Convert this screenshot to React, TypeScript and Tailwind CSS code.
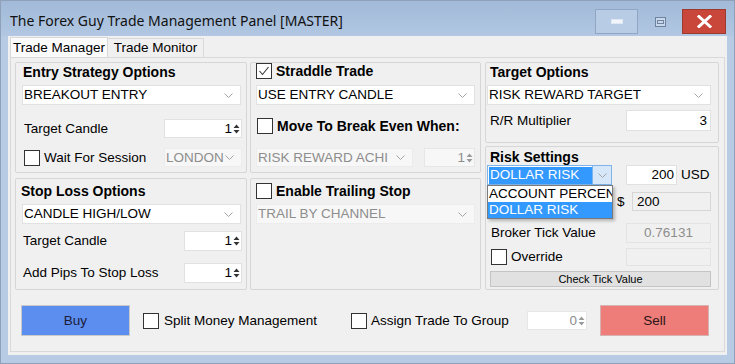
import React from "react";

type Box = { className?: string };

function Check({ checked }: { checked?: boolean }) {
   return (
      <span className="flex h-[16px] w-[16px] shrink-0 items-center justify-center border border-[#333] bg-white">
         {checked && (
            <svg width="12" height="12" viewBox="0 0 12 12">
               <path d="M1.5 6 L4.5 9.5 L10.5 2" stroke="#333" strokeWidth="1.1" fill="none" />
            </svg>
         )}
      </span>
   );
}

function Chevron() {
   return (
      <svg width="9" height="5" viewBox="0 0 9 5" className="shrink-0">
         <path d="M0.5 0.5 L4.5 4.5 L8.5 0.5" stroke="#a4a4a4" strokeWidth="1" fill="none" />
      </svg>
   );
}

function Combo({ value, className, disabled }: Box & { value: string; disabled?: boolean }) {
   return (
      <div
         className={
            "flex items-center overflow-hidden border pl-[1px] pr-[7px] " +
            (disabled ? "border-[#ececec] bg-[#f7f7f7] text-[#8d8d8d] " : "border-[#e1e1e1] bg-white ") +
            className
         }
      >
         <span className="flex-1 overflow-hidden whitespace-nowrap">{value}</span>
         <Chevron />
      </div>
   );
}

function Spin({ value, className, disabled }: Box & { value: string; disabled?: boolean }) {
   return (
      <div
         className={
            "flex items-center justify-end border pr-[1px] " +
            (disabled ? "border-[#e6e6e6] bg-[#f7f7f7] text-[#8d8d8d] " : "border-[#e1e1e1] bg-white ") +
            className
         }
      >
         <span>{value}</span>
         <svg width="7" height="12" viewBox="0 0 7 12" className="ml-[1px]">
            <path d="M0.5 5 L3.5 1.5 L6.5 5 Z M0.5 7 L3.5 10.5 L6.5 7 Z" fill={disabled ? "#9a9a9a" : "#333"} />
         </svg>
      </div>
   );
}

function Group({ className, children }: Box & { children: React.ReactNode }) {
   return <div className={"relative flex flex-col rounded-[2px] border border-[#d6d6d6] " + className}>{children}</div>;
}

function Title({ text, className }: Box & { text: string }) {
   return <div className={"h-[16px] text-[14px] leading-[16px] font-bold " + className}>{text}</div>;
}

export default function App() {
   return (
      <div className="flex h-[364px] w-[735px] flex-col border border-[#8ea1b8] bg-[#b7cbe4] font-['Liberation_Sans',Arial,sans-serif] text-[13.5px] leading-[16px] text-black">
         {/* title bar */}
         <div className="flex h-[35px] items-start bg-gradient-to-b from-[#a2bad8] to-[#b1c7e2]">
            <div className="mt-[11px] ml-[9px] flex-1 font-['Noto_Sans',sans-serif] text-[14px] leading-[18px] text-[#111]">
               The Forex Guy Trade Management Panel [MASTER]
            </div>
            <div className="mt-[8px] mr-[8px] flex">
               <button className="flex h-[25px] w-[43px] items-center justify-center border border-[#8fa6c4] bg-[#b9cce5]">
                  <span className="h-[5px] w-[12px] border border-[#dfe9f5] bg-[#f2f6fb]" />
               </button>
               <button className="flex h-[25px] w-[44px] items-center justify-center">
                  <span className="flex h-[10px] w-[11px] items-center justify-center border border-[#6f82a0] bg-[#c8d7ea]">
                     <span className="h-[4px] w-[7px] border border-[#6f82a0]" />
                  </span>
               </button>
               <button className="flex h-[25px] w-[44px] items-center justify-center border border-[#9c3a2e] bg-[#c8473a]">
                  <svg width="15" height="13" viewBox="0 0 15 13">
                     <path d="M2 1.5 L13 11.5 M13 1.5 L2 11.5" stroke="#fff" strokeWidth="3" strokeLinecap="square" />
                  </svg>
               </button>
            </div>
         </div>

         {/* client area */}
         <div className="mx-[7px] mb-[8px] flex flex-1 flex-col bg-[#f0f0f0] pt-[1px] pl-[2px]">
            {/* tabs */}
            <div className="flex h-[20px] items-end">
               <div className="flex h-[20px] w-[98px] items-center justify-center border border-b-0 border-[#d9d9d9] bg-[#fbfbfb]">
                  Trade Manager
               </div>
               <div className="flex h-[19px] w-[96px] items-center justify-center border border-b-0 border-l-0 border-[#d9d9d9]">
                  Trade Monitor
               </div>
            </div>

            {/* tab page */}
            <div className="mr-[2px] mb-[3px] flex w-[715px] flex-1 flex-col border border-[#d9d9d9] pt-[4px] pl-[4px]">
               <div className="flex">
                  {/* left column */}
                  <div className="flex w-[232px] flex-col">
                     <Group className="h-[111px]">
                        <Title text="Entry Strategy Options" className="mt-[1px] ml-[7px]" />
                        <Combo value="BREAKOUT ENTRY" className="mt-[5px] ml-[6px] h-[20px] w-[219px]" />
                        <div className="mt-[14px] flex h-[19px] items-center pl-[8px]">
                           <span className="flex-1">Target Candle</span>
                           <Spin value="1" className="mr-[4px] h-[19px] w-[78px]" />
                        </div>
                        <div className="mt-[10px] flex h-[19px] items-center pl-[8px]">
                           <Check />
                           <span className="ml-[4px] flex-1">Wait For Session</span>
                           <Combo value="LONDON" disabled className="mr-[4px] h-[19px] w-[78px]" />
                        </div>
                     </Group>
                     <Group className="mt-[5px] h-[112px]">
                        <Title text="Stop Loss Options" className="mt-[4px] ml-[5px]" />
                        <Combo value="CANDLE HIGH/LOW" className="mt-[5px] ml-[6px] h-[20px] w-[219px]" />
                        <div className="mt-[7px] flex h-[20px] items-center pl-[7px]">
                           <span className="flex-1">Target Candle</span>
                           <Spin value="1" className="mr-[4px] h-[20px] w-[58px]" />
                        </div>
                        <div className="mt-[12px] flex h-[20px] items-center pl-[7px]">
                           <span className="flex-1">Add Pips To Stop Loss</span>
                           <Spin value="1" className="mr-[4px] h-[20px] w-[58px]" />
                        </div>
                     </Group>
                  </div>

                  {/* middle column */}
                  <div className="ml-[3px] flex w-[231px] flex-col">
                     <Group className="h-[111px]">
                        <div className="ml-[5px] flex items-center">
                           <Check checked />
                           <span className="ml-[4px] text-[14px] font-bold">Straddle Trade</span>
                        </div>
                        <Combo value="USE ENTRY CANDLE" className="mt-[6px] ml-[5px] h-[20px] w-[219px]" />
                        <div className="mt-[13px] ml-[6px] flex items-center">
                           <Check />
                           <span className="ml-[4px] text-[14px] font-bold">Move To Break Even When:</span>
                        </div>
                        <div className="mt-[14px] ml-[5px] flex h-[19px] items-center">
                           <Combo value="RISK REWARD ACHI" disabled className="h-[19px] w-[157px]" />
                           <Spin value="1" disabled className="ml-[11px] h-[19px] w-[51px]" />
                        </div>
                     </Group>
                     <Group className="mt-[5px] h-[112px]">
                        <div className="mt-[4px] ml-[5px] flex items-center">
                           <Check />
                           <span className="ml-[4px] text-[14px] font-bold">Enable Trailing Stop</span>
                        </div>
                        <Combo value="TRAIL BY CHANNEL" disabled className="mt-[5px] ml-[5px] h-[20px] w-[219px]" />
                     </Group>
                  </div>

                  {/* right column */}
                  <div className="ml-[4px] flex w-[234px] flex-col">
                     <Group className="h-[81px]">
                        <Title text="Target Options" className="mt-[1px] ml-[4px]" />
                        <Combo value="RISK REWARD TARGET" className="mt-[5px] ml-[1px] h-[20px] w-[224px]" />
                        <div className="mt-[5px] flex h-[21px] items-center pl-[4px]">
                           <span className="flex-1">R/R Multiplier</span>
                           <div className="mr-[7px] flex h-[21px] w-[85px] items-center justify-end border border-[#e1e1e1] bg-white pr-[3px]">
                              3
                           </div>
                        </div>
                     </Group>
                     <Group className="mt-[3px] h-[144px]">
                        <Title text="Risk Settings" className="mt-[2px] ml-[4px]" />
                        <div className="flex h-[20px] items-center pl-[1px]">
                           <div className="relative h-[20px] w-[125px]">
                              <div className="flex h-[20px] w-[125px] items-center border border-[#7eb4ea] bg-white">
                                 <span className="ml-[1px] flex h-[17px] flex-1 items-center bg-[#3399ff] pl-[1px] text-white">
                                    DOLLAR RISK
                                 </span>
                                 <span className="flex h-[18px] w-[19px] items-center justify-center border-l border-[#7eb4ea] bg-[#d5e7f8]">
                                    <Chevron />
                                 </span>
                              </div>
                              {/* open dropdown list */}
                              <div className="absolute top-[20px] left-0 z-10 w-[126px] border border-[#7a7a7a] bg-white shadow-[2px_2px_3px_rgba(0,0,0,0.25)]">
                                 <div className="h-[16px] w-[124px] overflow-hidden pl-[1px] whitespace-nowrap">ACCOUNT PERCEN</div>
                                 <div className="h-[16px] bg-[#3399ff] pl-[1px] text-white">DOLLAR RISK</div>
                              </div>
                           </div>
                           <div className="ml-[14px] flex h-[20px] w-[51px] items-center justify-end border border-[#e1e1e1] bg-white pr-[2px]">
                              200
                           </div>
                           <span className="ml-[4px]">USD</span>
                        </div>
                        <div className="mt-[7px] flex h-[19px] items-center">
                           <span className="ml-[130px] w-[16px] pl-[1px]">$</span>
                           <div className="flex h-[19px] w-[79px] items-center border border-[#d6d6d6] bg-[#f0f0f0] pl-[4px]">200</div>
                        </div>
                        <div className="mt-[12px] flex h-[20px] items-center pl-[5px]">
                           <span className="flex-1">Broker Tick Value</span>
                           <div className="mr-[7px] flex h-[20px] w-[85px] items-center justify-center border border-[#e3e3e3] bg-[#f0f0f0] text-[#8d8d8d]">
                              0.76131
                           </div>
                        </div>
                        <div className="mt-[5px] flex h-[18px] items-center pl-[5px]">
                           <Check />
                           <span className="ml-[4px] flex-1">Override</span>
                           <div className="mr-[7px] h-[18px] w-[85px] border border-[#e3e3e3] bg-[#f0f0f0]" />
                        </div>
                        <button className="mt-[5px] ml-[4px] flex h-[16px] w-[221px] items-center justify-center border border-[#c4c4c4] bg-[#e1e1e1] text-[11px] leading-[14px]">
                           Check Tick Value
                        </button>
                     </Group>
                  </div>
               </div>

               {/* bottom actions */}
               <div className="mt-[15px] ml-[6px] flex h-[31px] items-center">
                  <button className="h-[31px] w-[109px] border border-[#c9c9c9] bg-[#5b8eef] text-[#1c1c3a]">Buy</button>
                  <div className="ml-[13px] flex w-[208px] items-center">
                     <Check />
                     <span className="ml-[5px]">Split Money Management</span>
                  </div>
                  <div className="flex w-[176px] items-center">
                     <Check />
                     <span className="ml-[4px]">Assign Trade To Group</span>
                  </div>
                  <Spin value="0" disabled className="h-[19px] w-[60px] bg-white" />
                  <button className="ml-[13px] h-[31px] w-[109px] border border-[#d6b3b3] bg-[#ee7d7a] text-[#2a1414]">Sell</button>
               </div>
            </div>
         </div>
      </div>
   );
}
